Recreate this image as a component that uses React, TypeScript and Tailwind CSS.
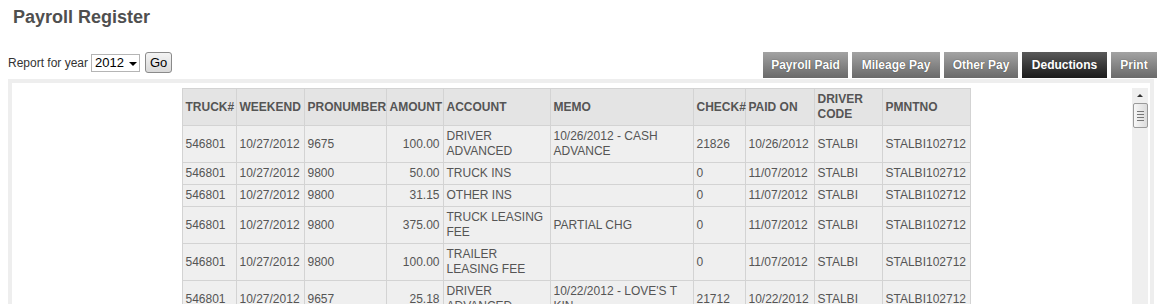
const columns = ["TRUCK#", "WEEKEND", "PRONUMBER", "AMOUNT", "ACCOUNT", "MEMO", "CHECK#", "PAID ON", "DRIVER CODE", "PMNTNO"];
const widths = ["w-[54px]", "w-[68px]", "w-[82px]", "w-[57px]", "w-[107px]", "w-[143px]", "w-[52px]", "w-[69px]", "w-[68px]", "w-[88px]"];

const rows = [
  ["546801", "10/27/2012", "9675", "100.00", "DRIVER ADVANCED", "10/26/2012 - CASH ADVANCE", "21826", "10/26/2012", "STALBI", "STALBI102712"],
  ["546801", "10/27/2012", "9800", "50.00", "TRUCK INS", "", "0", "11/07/2012", "STALBI", "STALBI102712"],
  ["546801", "10/27/2012", "9800", "31.15", "OTHER INS", "", "0", "11/07/2012", "STALBI", "STALBI102712"],
  ["546801", "10/27/2012", "9800", "375.00", "TRUCK LEASING FEE", "PARTIAL CHG", "0", "11/07/2012", "STALBI", "STALBI102712"],
  ["546801", "10/27/2012", "9800", "100.00", "TRAILER LEASING FEE", "", "0", "11/07/2012", "STALBI", "STALBI102712"],
  ["546801", "10/27/2012", "9657", "25.18", "DRIVER ADVANCED", "10/22/2012 - LOVE'S T KIN", "21712", "10/22/2012", "STALBI", "STALBI102712"],
];

const tabs = [
  { label: "Payroll Paid", w: "w-[85px]" },
  { label: "Mileage Pay", w: "w-[88px]" },
  { label: "Other Pay", w: "w-[74px]" },
  { label: "Deductions", w: "w-[85px]" },
  { label: "Print", w: "w-[46px]" },
];

const App = () => {
  return (
    <div className="h-[304px] overflow-hidden bg-white font-['Liberation_Sans',Arial,sans-serif] text-[12px] text-[#333]">
      <h1 className="pl-[13px] pt-[6px] text-[18px] font-bold leading-[22px] text-[#4f4f4f]">Payroll Register</h1>

      <div className="mt-[24px] flex items-end justify-between pl-[8px] pr-[5px]">
        <div className="mb-[5px] flex items-center">
          <span>Report for year</span>
          <div className="ml-[3px] flex h-[18px] w-[49px] items-center border border-[#b5b5b5] bg-white pl-[3px] text-[13px] text-black">
            2012
            <span className="ml-[5px] mt-[2px] h-0 w-0 border-x-[4px] border-t-[4px] border-x-transparent border-t-black" />
          </div>
          <button className="ml-[5px] h-[21px] w-[27px] rounded-[3px] border border-[#8a8a8a] bg-gradient-to-b from-[#f4f4f4] to-[#d9d9d9] text-[13px] text-black">
            Go
          </button>
        </div>
        <div className="flex gap-[4px]">
          {tabs.map((t) => (
            <div
              key={t.label}
              className={`${t.w} flex h-[26px] items-center justify-center font-bold text-white [text-shadow:0_0_1px_#333] ${
                t.label === "Deductions"
                  ? "bg-gradient-to-b from-[#5a5a5a] to-[#1c1c1c]"
                  : "bg-gradient-to-b from-[#a3a3a3] to-[#6a6a6a]"
              }`}
            >
              {t.label}
            </div>
          ))}
        </div>
      </div>

      <div className="mx-[8px] mt-[1px] bg-[#eeeeee] px-[4px] pt-[4px] pr-[4px]">
        <div className="flex h-[240px] bg-white">
          <div className="flex flex-1 justify-center pt-[5px] pl-[8px]">
            <table className="h-fit w-[788px] table-fixed border-collapse bg-[#efefef] text-[#555]">
              <thead>
                <tr>
                  {columns.map((c, i) => (
                    <th
                      key={c}
                      className={`${widths[i]} border border-[#d3d3d3] bg-[#e4e4e4] px-[3px] py-[3px] text-left align-middle leading-[15px] font-bold text-[#555] whitespace-nowrap`}
                    >
                      {c === "DRIVER CODE" ? (
                        <>
                          DRIVER
                          <br />
                          CODE
                        </>
                      ) : (
                        c
                      )}
                    </th>
                  ))}
                </tr>
              </thead>
              <tbody>
                {rows.map((r, ri) => (
                  <tr key={ri}>
                    {r.map((v, i) => (
                      <td
                        key={i}
                        className={`${widths[i]} border border-[#d3d3d3] px-[3px] py-[3px] align-middle leading-[15px] ${
                          i === 3 ? "text-right" : "text-left"
                        }`}
                      >
                        {v}
                      </td>
                    ))}
                  </tr>
                ))}
              </tbody>
            </table>
          </div>
          <div className="mt-[5px] mr-[2px] flex w-[16px] flex-col items-center bg-[#efefef]">
            <span className="mt-[6px] h-0 w-0 border-x-[3px] border-b-[3px] border-x-transparent border-b-[#333]" />
            <div className="mt-[6px] flex h-[25px] w-[15px] flex-col items-center justify-center gap-[2px] rounded-[2px] border border-[#9a9a9a] bg-gradient-to-r from-[#f7f7f7] to-[#dcdcdc]">
              <span className="h-px w-[7px] bg-[#777]" />
              <span className="h-px w-[7px] bg-[#777]" />
              <span className="h-px w-[7px] bg-[#777]" />
              <span className="h-px w-[7px] bg-[#777]" />
            </div>
          </div>
        </div>
      </div>
    </div>
  );
};

export default App;
